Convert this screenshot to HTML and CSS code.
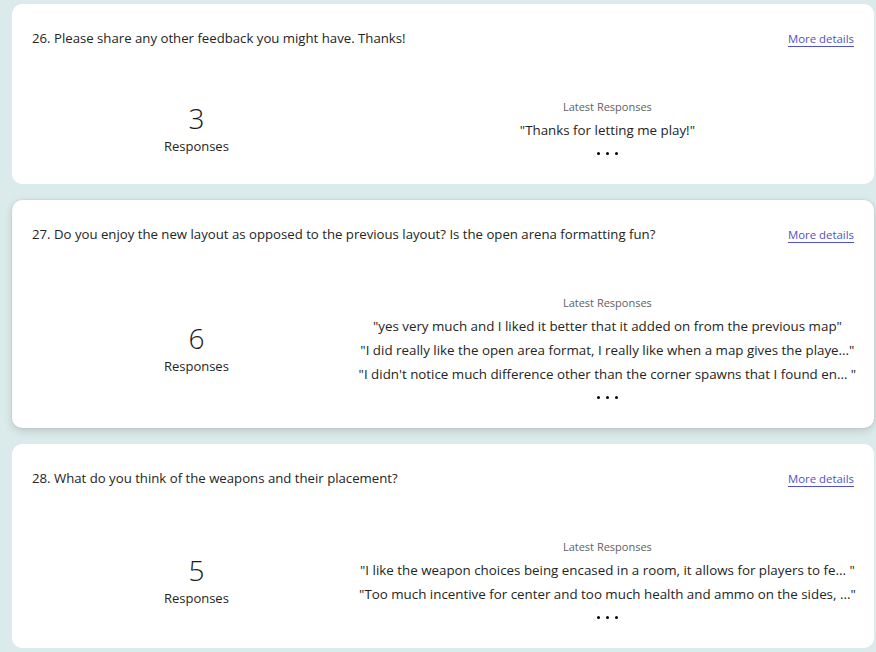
FILE: index.html
```html
<!DOCTYPE html>
<html lang="en">
<head>
<meta charset="utf-8">
<title>Responses</title>
<link rel="stylesheet" href="styles.css">
</head>
<body>
<main class="page">
  <section class="card">
    <div class="card-head">
      <div class="question">26. Please share any other feedback you might have. Thanks!</div>
      <a class="more" href="#">More details</a>
    </div>
    <div class="card-body">
      <div class="count">
        <div class="count-num">3</div>
        <div class="count-label">Responses</div>
      </div>
      <div class="latest">
        <div class="latest-title">Latest Responses</div>
        <div class="quote">"Thanks for letting me play!"</div>
        <div class="dots"><span></span><span></span><span></span></div>
      </div>
    </div>
  </section>

  <section class="card card-hover">
    <div class="card-head">
      <div class="question">27. Do you enjoy the new layout as opposed to the previous layout? Is the open arena formatting fun?</div>
      <a class="more" href="#">More details</a>
    </div>
    <div class="card-body">
      <div class="count">
        <div class="count-num">6</div>
        <div class="count-label">Responses</div>
      </div>
      <div class="latest">
        <div class="latest-title">Latest Responses</div>
        <div class="quote">"yes very much and I liked it better that it added on from the previous map"</div>
        <div class="quote">"I did really like the open area format, I really like when a map gives the playe..."</div>
        <div class="quote">"I didn't notice much difference other than the corner spawns that I found en... "</div>
        <div class="dots"><span></span><span></span><span></span></div>
      </div>
    </div>
  </section>

  <section class="card">
    <div class="card-head">
      <div class="question">28. What do you think of the weapons and their placement?</div>
      <a class="more" href="#">More details</a>
    </div>
    <div class="card-body">
      <div class="count">
        <div class="count-num">5</div>
        <div class="count-label">Responses</div>
      </div>
      <div class="latest">
        <div class="latest-title">Latest Responses</div>
        <div class="quote">"I like the weapon choices being encased in a room, it allows for players to fe... "</div>
        <div class="quote">"Too much incentive for center and too much health and ammo on the sides, ..."</div>
        <div class="dots"><span></span><span></span><span></span></div>
      </div>
    </div>
  </section>
</main>
</body>
</html>
```

FILE: styles.css
```css
html, body {
  margin: 0;
  padding: 0;
}

body {
  background: #dbeaea;
  font-family: "Segoe UI", "Open Sans", "Noto Sans", sans-serif;
  color: #242424;
  width: 876px;
  height: 652px;
  overflow: hidden;
}

.page {
  display: flex;
  flex-direction: column;
  gap: 16px;
  padding: 4px 2px 0 12px;
}

.card {
  background: #ffffff;
  border-radius: 10px;
  padding: 24px 20px 20px 20px;
}

.card-hover {
  box-shadow: 0 3px 8px rgba(0, 0, 0, 0.14), 0 0 2px rgba(0, 0, 0, 0.12);
}

.card-head {
  display: flex;
  justify-content: space-between;
  align-items: center;
  height: 20px;
}

.question {
  font-size: 13.2px;
  line-height: 20px;
  color: #242424;
}

.more {
  font-size: 11.4px;
  line-height: 20px;
  margin-top: 2px;
  color: #4f52c8;
  text-decoration: underline;
  text-underline-offset: 3px;
  text-decoration-color: #4f52c8;
}

.card-body {
  display: grid;
  grid-template-columns: 40% 60%;
  align-items: center;
  margin-top: 50px;
}

.count {
  display: flex;
  flex-direction: column;
  align-items: center;
  margin-bottom: 7px;
}

.count-num {
  font-size: 28px;
  line-height: 36px;
  font-weight: 300;
  color: #1a1a1a;
}

.count-label {
  font-size: 13px;
  line-height: 20px;
  color: #242424;
}

.latest {
  display: flex;
  flex-direction: column;
  align-items: center;
}

.latest-title {
  font-size: 11px;
  line-height: 18px;
  margin-bottom: 2px;
  color: #616161;
}

.quote {
  font-size: 13.35px;
  line-height: 24px;
  color: #242424;
  white-space: nowrap;
}

.dots {
  display: flex;
  justify-content: center;
  align-items: center;
  gap: 6px;
  height: 22px;
}

.dots span {
  width: 3px;
  height: 3px;
  border-radius: 50%;
  background: #000000;
}
```
